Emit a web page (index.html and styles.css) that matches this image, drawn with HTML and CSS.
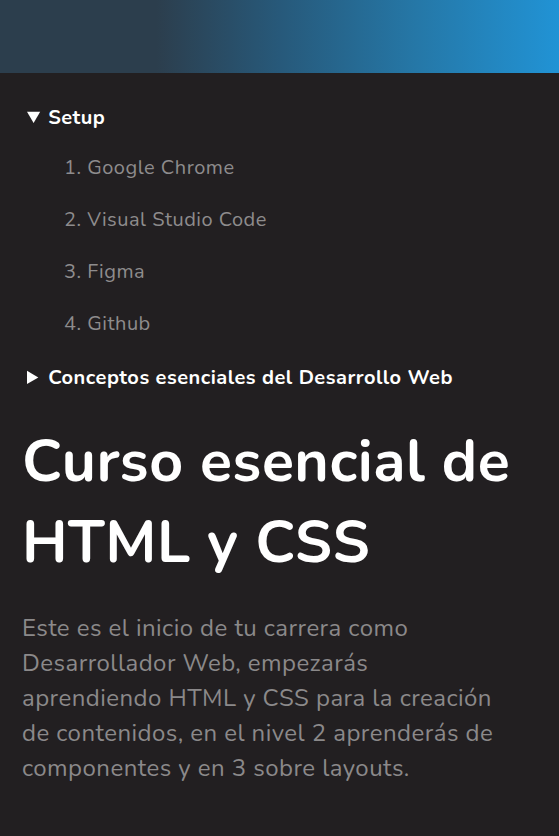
FILE: index.html
```html
<!DOCTYPE html>
<html lang="es">
<head>
<meta charset="utf-8">
<title>Curso esencial de HTML y CSS</title>
<link rel="stylesheet" href="styles.css">
</head>
<body>
<header class="top-bar"></header>
<main class="content">
  <details class="topic" open>
    <summary class="topic-title">Setup</summary>
    <ol class="topic-list">
      <li>Google Chrome</li>
      <li>Visual Studio Code</li>
      <li>Figma</li>
      <li>Github</li>
    </ol>
  </details>
  <details class="topic">
    <summary class="topic-title">Conceptos esenciales del Desarrollo Web</summary>
    <ol class="topic-list">
      <li>HTML</li>
      <li>CSS</li>
    </ol>
  </details>
  <h1 class="title">Curso esencial de HTML y CSS</h1>
  <p class="intro">Este es el inicio de tu carrera como<br>Desarrollador Web, empezarás<br>aprendiendo HTML y CSS para la creación<br>de contenidos, en el nivel 2 aprenderás de<br>componentes y en 3 sobre layouts.</p>
</main>
</body>
</html>
```
FILE: styles.css
```css
* { box-sizing: border-box; }
html, body {
  margin: 0;
  padding: 0;
  background: #221f21;
}
body {
  font-family: "Nunito", "Lato", "Noto Sans", sans-serif;
  color: #ffffff;
  letter-spacing: 0.5px;
}
.top-bar {
  height: 73px;
  background: linear-gradient(to right, #2c3e4d 0%, #2c3e4d 28%, #27597a 50%, #2578a8 75%, #2193d5 100%);
}
.content {
  padding: 31px 22px 40px 22px;
}
.topic-title {
  font-size: 20px;
  font-weight: 700;
  line-height: 28px;
  cursor: pointer;
  padding-left: 5px;
}
.topic-list {
  margin: 0;
  padding: 0 0 0 42px;
  list-style-position: inside;
  color: #8e8c8d;
  font-size: 20px;
  line-height: 28px;
}
.topic-list li {
  margin-top: 22px;
}
.topic-list li + li {
  margin-top: 24px;
}
.topic + .topic {
  margin-top: 26px;
}
.title {
  margin: 29px 0 0 0;
  font-size: 59px;
  line-height: 81px;
  font-weight: 700;
}
.intro {
  margin: 28px 0 0 0;
  font-size: 24px;
  line-height: 35px;
  color: #8b898a;
  letter-spacing: 0.45px;
  white-space: nowrap;
}
```
